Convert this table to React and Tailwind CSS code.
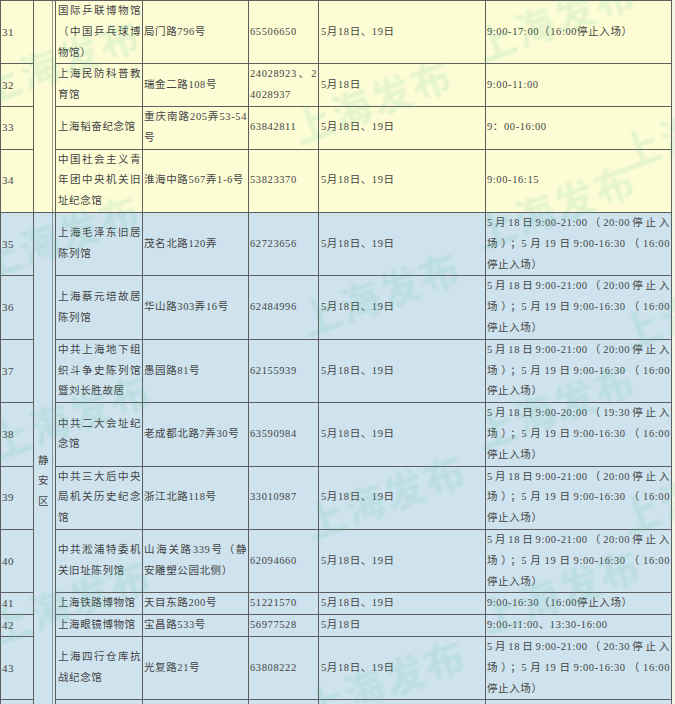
import React from "react";

const rows = [
  { n: 31, name: ["国际乒联博物馆", "（中国乒乓球博", "物馆）"], addr: ["局门路796号"], tel: ["65506650"], date: "5月18日、19日", hours: ["9:00-17:00（16:00停止入场）"], c: "y" },
  { n: 32, name: ["上海民防科普教", "育馆"], addr: ["瑞金二路108号"], tel: ["24028923、2", "4028937"], date: "5月18日", hours: ["9:00-11:00"], c: "y" },
  { n: 33, name: ["上海韬奋纪念馆"], addr: ["重庆南路205弄53-54", "号"], tel: ["63842811"], date: "5月18日、19日", hours: ["9：00-16:00"], c: "y" },
  { n: 34, name: ["中国社会主义青", "年团中央机关旧", "址纪念馆"], addr: ["淮海中路567弄1-6号"], tel: ["53823370"], date: "5月18日、19日", hours: ["9:00-16:15"], c: "y" },
  { n: 35, name: ["上海毛泽东旧居", "陈列馆"], addr: ["茂名北路120弄"], tel: ["62723656"], date: "5月18日、19日", hours: ["5月18日9:00-21:00（20:00停止入", "场）；5月19日9:00-16:30（16:00", "停止入场）"], c: "b" },
  { n: 36, name: ["上海蔡元培故居", "陈列馆"], addr: ["华山路303弄16号"], tel: ["62484996"], date: "5月18日、19日", hours: ["5月18日9:00-21:00（20:00停止入", "场）；5月19日9:00-16:30（16:00", "停止入场）"], c: "b" },
  { n: 37, name: ["中共上海地下组", "织斗争史陈列馆", "暨刘长胜故居"], addr: ["愚园路81号"], tel: ["62155939"], date: "5月18日、19日", hours: ["5月18日9:00-21:00（20:00停止入", "场）；5月19日9:00-16:30（16:00", "停止入场）"], c: "b" },
  { n: 38, name: ["中共二大会址纪", "念馆"], addr: ["老成都北路7弄30号"], tel: ["63590984"], date: "5月18日、19日", hours: ["5月18日9:00-20:00（19:30停止入", "场）；5月19日9:00-16:30（16:00", "停止入场）"], c: "b" },
  { n: 39, name: ["中共三大后中央", "局机关历史纪念", "馆"], addr: ["浙江北路118号"], tel: ["33010987"], date: "5月18日、19日", hours: ["5月18日9:00-21:00（20:00停止入", "场）；5月19日9:00-16:30（16:00", "停止入场）"], c: "b" },
  { n: 40, name: ["中共淞浦特委机", "关旧址陈列馆"], addr: ["山海关路339号（静", "安雕塑公园北侧）"], tel: ["62094660"], date: "5月18日、19日", hours: ["5月18日9:00-21:00（20:00停止入", "场）；5月19日9:00-16:30（16:00", "停止入场）"], c: "b" },
  { n: 41, name: ["上海铁路博物馆"], addr: ["天目东路200号"], tel: ["51221570"], date: "5月18日、19日", hours: ["9:00-16:30（16:00停止入场）"], c: "b" },
  { n: 42, name: ["上海眼镜博物馆"], addr: ["宝昌路533号"], tel: ["56977528"], date: "5月18日", hours: ["9:00-11:00、13:30-16:00"], c: "b" },
  { n: 43, name: ["上海四行仓库抗", "战纪念馆"], addr: ["光复路21号"], tel: ["63808222"], date: "5月18日、19日", hours: ["5月18日9:00-21:00（20:30停止入", "场）；5月19日9:00-16:30（16:00", "停止入场）"], c: "b" },
  { n: 44, name: ["\u00a0", "\u00a0", "\u00a0"], addr: ["\u00a0"], tel: ["\u00a0"], date: "\u00a0", hours: ["\u00a0"], c: "b" },
];

function Lines({ lines }) {
  return (
    <>
      {lines.map((l, i) => (
        <div
          key={i}
          className={
            lines.length > 1 && i < lines.length - 1
              ? "whitespace-nowrap [text-align-last:justify] text-justify"
              : "whitespace-nowrap"
          }
        >
          {l}
        </div>
      ))}
    </>
  );
}

const marks = [
  [60, 60], [555, 18], [372, 100], [700, 125],
  [60, 235], [555, 205], [380, 292], [700, 305],
  [70, 415], [555, 405], [385, 495], [700, 490],
  [70, 600], [560, 590], [385, 680],
];

export default function App() {
  const cell = "border border-[#5e5e5e] px-[1px] py-0 align-middle text-left";
  return (
    <div className="relative w-[675px] h-[704px] overflow-hidden bg-[#f6f6e4]">
      <table
        className="table-fixed border-collapse w-[671px] text-[10.5px] leading-[20.8px] tracking-[0.6px] text-[#444444]"
        style={{ fontFamily: '"Liberation Serif", "Noto Sans CJK SC", serif' }}
      >
        <colgroup>
          <col className="w-[33px]" />
          <col className="w-[22px]" />
          <col className="w-[87px]" />
          <col className="w-[106px]" />
          <col className="w-[70px]" />
          <col className="w-[167px]" />
          <col className="w-[186px]" />
        </colgroup>
        <tbody>
          {rows.map((r, idx) => {
            const bg = r.c === "y" ? "bg-[#fdfdd5]" : "bg-[#cee3ee]";
            return (
              <tr key={r.n} className={bg}>
                <td className={`${cell} text-center text-[11px]`}>{r.n === 44 ? "\u00a0" : r.n}</td>
                {idx === 0 && (
                  <td
                    rowSpan={4}
                    className="border border-[#5e5e5e] bg-[#fdfdd5] shadow-[inset_-2px_0_0_0_#fdfdd5,inset_-3px_0_0_0_#9a9a8a]"
                  />
                )}
                {idx === 4 && (
                  <td
                    rowSpan={10}
                    className="border border-[#5e5e5e] bg-[#cee3ee] text-center align-middle pr-[2px] shadow-[inset_-2px_0_0_0_#cee3ee,inset_-3px_0_0_0_#8a9aa4]"
                  >
                    <div className="-mt-[12px]">
                      <div>静</div>
                      <div>安</div>
                      <div>区</div>
                    </div>
                  </td>
                )}
                <td className={`${cell} pl-[2px]`}>
                  <Lines lines={r.name} />
                </td>
                <td className={cell}>
                  <Lines lines={r.addr} />
                </td>
                <td className={cell}>
                  <Lines lines={r.tel} />
                </td>
                <td className={`${cell} pl-[2px]`}>{r.date}</td>
                <td className={cell}>
                  <Lines lines={r.hours} />
                </td>
              </tr>
            );
          })}
        </tbody>
      </table>
      <div className="pointer-events-none absolute inset-0 blur-[1px]">
        {marks.map(([x, y], i) => (
          <div
            key={i}
            className="absolute whitespace-nowrap text-[40px] font-bold leading-none tracking-[2px] text-[rgba(80,190,150,0.14)]"
            style={{
              left: x,
              top: y,
              transform: "translate(-50%, -50%) rotate(-20deg)",
              fontFamily: '"Noto Sans CJK SC", sans-serif',
            }}
          >
            上海发布
          </div>
        ))}
      </div>
    </div>
  );
}
